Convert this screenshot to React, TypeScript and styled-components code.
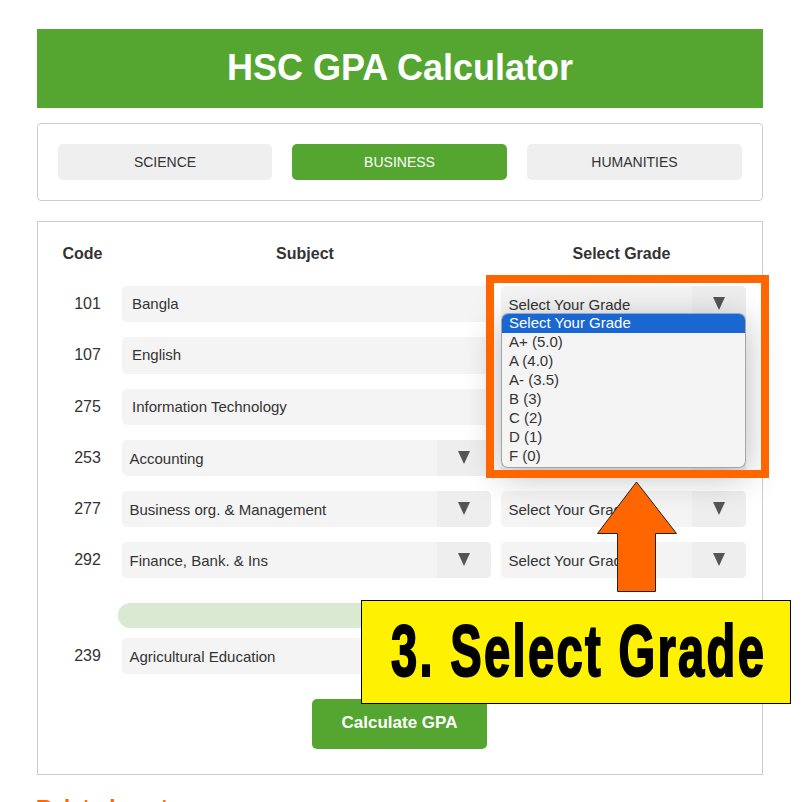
import React from "react";
import styled, { createGlobalStyle } from "styled-components";

const Global = createGlobalStyle`
  html, body { margin: 0; padding: 0; background: #fff; height: 802px; overflow: hidden; }
  body { font-family: "Liberation Sans", Arial, sans-serif; color: #333; }
  * { box-sizing: border-box; }
`;

const Page = styled.div`
  position: relative;
  width: 803px;
  height: 802px;
  overflow: hidden;
  padding: 29px 40px 0 37px;
`;
const Header = styled.h1`
  margin: 0 0 15px;
  height: 79px;
  background: #55a630;
  color: #fff;
  font-size: 36px;
  font-weight: 700;
  line-height: 77px;
  text-align: center;
`;
const TabBox = styled.div`
  display: grid;
  grid-template-columns: 214px 215px 215px;
  gap: 20px;
  padding: 20px;
  margin-bottom: 20px;
  border: 1px solid #ccc;
  border-radius: 4px;
`;
const Tab = styled.div<{ $active?: boolean }>`
  height: 36px;
  border-radius: 5px;
  background: ${(p) => (p.$active ? "#55a630" : "#efefef")};
  color: ${(p) => (p.$active ? "#fff" : "#333")};
  font-size: 14px;
  line-height: 36px;
  text-align: center;
`;
const Card = styled.div`
  border: 1px solid #ccc;
  padding: 16px 16px 25px 15px;
`;
const HeadRow = styled.div`
  display: grid;
  grid-template-columns: 69px 379px 245px;
  height: 30px;
  margin-bottom: 18px;
  font-size: 16px;
  font-weight: 700;
  line-height: 32px;
`;
const HeadCell = styled.div<{ $shift: number }>`
  text-align: center;
  padding-right: ${(p) => p.$shift}px;
`;
const Row = styled.div<{ $tall?: boolean; $last?: boolean }>`
  display: grid;
  grid-template-columns: 69px 369px 255px;
  grid-template-rows: minmax(0, 1fr);
  height: ${(p) => (p.$tall ? 37 : 36)}px;
  margin-bottom: ${(p) => (p.$last ? 0 : 15)}px;
`;
const FinalRow = styled(Row)`
  margin-bottom: 25px;
`;
const CodeCell = styled.div`
  font-size: 16px;
  line-height: 36px;
  text-align: center;
`;
const TextBox = styled.div`
  background: #f4f4f4;
  border-radius: 5px;
  font-size: 15px;
  line-height: 36px;
  padding-left: 10px;
`;
const GradeSlot = styled.div`
  position: relative;
  margin-left: 10px;
`;
const Select = styled.div`
  display: flex;
  height: 100%;
  background: #f4f4f4;
  border-radius: 5px;
  overflow: hidden;
  font-size: 15px;
  line-height: 38px;
`;
const SelectText = styled.div`
  flex: 1;
  padding-left: 7.5px;
  white-space: nowrap;
  overflow: hidden;
`;
const ArrowCell = styled.div`
  width: 54px;
  display: flex;
  align-items: center;
  justify-content: center;
  background: #eee;
`;
const Caret = styled.span`
  width: 0;
  height: 0;
  margin-bottom: 1px;
  border-left: 6.5px solid transparent;
  border-right: 6.5px solid transparent;
  border-top: 13px solid #555;
`;
const Banner = styled.div`
  height: 25px;
  margin: 25px 0 10px 65px;
  width: 628px;
  background: #d9e9d2;
  border-radius: 12px;
`;
const Calculate = styled.div`
  width: 175px;
  height: 50px;
  margin: 0 auto;
  background: #55a630;
  border-radius: 5px;
  color: #fff;
  font-size: 17px;
  font-weight: 700;
  line-height: 48px;
  text-align: center;
`;
const Related = styled.h2`
  margin: 20px 0 0 -1px;
  color: #ff6600;
  font-size: 22px;
  font-weight: 700;
  line-height: 26px;
`;
const Dropdown = styled.ul`
  position: absolute;
  top: 27px;
  left: 0;
  width: 245px;
  margin: 0;
  padding: 0 0 1px;
  list-style: none;
  background: #f4f4f4;
  border: 1px solid #a5a5a5;
  border-top-color: #8fa9cf;
  border-radius: 7px;
  overflow: hidden;
  font-size: 15px;
  line-height: 18px;
  z-index: 2;
`;
const DropShadow = styled.div`
  position: absolute;
  top: 27px;
  left: 0;
  width: 245px;
  height: 154px;
  border-radius: 7px;
  box-shadow: 0 8px 36px rgba(0, 0, 0, 0.28);
  z-index: 1;
`;
const Option = styled.li<{ $selected?: boolean }>`
  padding-left: 7px;
  height: 19px;
  background: ${(p) => (p.$selected ? "#1a67d2" : "transparent")};
  color: ${(p) => (p.$selected ? "#fff" : "#333")};
`;
const Frame = styled.div`
  position: absolute;
  left: 486px;
  top: 275px;
  width: 283px;
  height: 203px;
  border: 8px solid #ff6600;
  z-index: 3;
`;
const UpArrow = styled.svg`
  position: absolute;
  left: 590px;
  top: 478px;
  z-index: 4;
`;
const Callout = styled.div`
  position: absolute;
  left: 361px;
  top: 600px;
  width: 430px;
  height: 104px;
  background: #fff200;
  border: 1.5px solid #000;
  z-index: 5;
`;
const CalloutText = styled.span`
  position: absolute;
  left: 29px;
  top: 8px;
  color: #000;
  font-family: "Liberation Sans", Arial, sans-serif;
  font-size: 72px;
  font-weight: 700;
  letter-spacing: 3.5px;
  line-height: 84px;
  white-space: nowrap;
  transform: scaleX(0.655);
  transform-origin: 0 0;
  -webkit-text-stroke: 2px #000;
`;

const GRADE = "Select Your Grade";
const OPTIONS = ["A+ (5.0)", "A (4.0)", "A- (3.5)", "B (3)", "C (2)", "D (1)", "F (0)"];

const Dropish = ({ label }: { label: string }) => (
  <Select>
    <SelectText>{label}</SelectText>
    <ArrowCell>
      <Caret />
    </ArrowCell>
  </Select>
);

export default function App() {
  return (
    <Page>
      <Global />
      <Header>HSC GPA Calculator</Header>
      <TabBox>
        <Tab>SCIENCE</Tab>
        <Tab $active>BUSINESS</Tab>
        <Tab>HUMANITIES</Tab>
      </TabBox>
      <Card>
        <HeadRow>
          <HeadCell $shift={10}>Code</HeadCell>
          <HeadCell $shift={13}>Subject</HeadCell>
          <HeadCell $shift={4}>Select Grade</HeadCell>
        </HeadRow>
        <Row>
          <CodeCell>101</CodeCell>
          <TextBox>Bangla</TextBox>
          <GradeSlot>
            <Dropish label={GRADE} />
            <DropShadow />
            <Dropdown>
              <Option $selected>{GRADE}</Option>
              {OPTIONS.map((o) => (
                <Option key={o}>{o}</Option>
              ))}
            </Dropdown>
          </GradeSlot>
        </Row>
        <Row $tall>
          <CodeCell>107</CodeCell>
          <TextBox>English</TextBox>
          <GradeSlot>
            <Dropish label={GRADE} />
          </GradeSlot>
        </Row>
        <Row>
          <CodeCell>275</CodeCell>
          <TextBox>Information Technology</TextBox>
          <GradeSlot>
            <Dropish label={GRADE} />
          </GradeSlot>
        </Row>
        <Row>
          <CodeCell>253</CodeCell>
          <Dropish label="Accounting" />
          <GradeSlot>
            <Dropish label={GRADE} />
          </GradeSlot>
        </Row>
        <Row>
          <CodeCell>277</CodeCell>
          <Dropish label="Business org. & Management" />
          <GradeSlot>
            <Dropish label={GRADE} />
          </GradeSlot>
        </Row>
        <Row $last>
          <CodeCell>292</CodeCell>
          <Dropish label="Finance, Bank. & Ins" />
          <GradeSlot>
            <Dropish label={GRADE} />
          </GradeSlot>
        </Row>
        <Banner />
        <FinalRow>
          <CodeCell>239</CodeCell>
          <Dropish label="Agricultural Education" />
          <GradeSlot>
            <Dropish label={GRADE} />
          </GradeSlot>
        </FinalRow>
        <Calculate>Calculate GPA</Calculate>
      </Card>
      <Related>Related posts</Related>
      <Frame />
      <UpArrow width="94" height="116" viewBox="0 0 94 116">
        <path
          d="M46.5 4 L86.5 55.5 L65.5 55.5 L65.5 113.5 L27.5 113.5 L27.5 55.5 L7.5 55.5 Z"
          fill="#ff6600"
          stroke="#222"
          strokeWidth="1"
        />
      </UpArrow>
      <Callout>
        <CalloutText>3. Select Grade</CalloutText>
      </Callout>
    </Page>
  );
}
